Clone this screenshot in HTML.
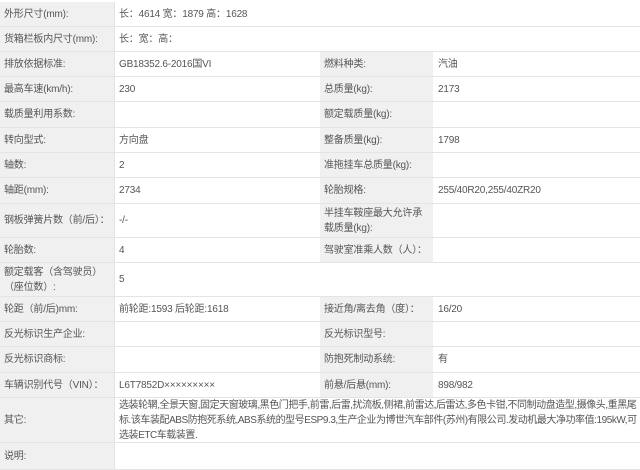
<!DOCTYPE html>
<html><head><meta charset="utf-8"><style>
body{margin:0;width:640px;height:470px;overflow:hidden;background:#fff;font-family:"Liberation Sans","Noto Sans CJK SC",sans-serif;font-size:10px;color:#555;letter-spacing:-0.2px}
.c{position:absolute;box-sizing:border-box;display:flex;align-items:center;padding-left:5px;border-bottom:1px solid #e4e4e4;line-height:15px}
.l{background:#f0f0f0}
</style></head><body>
<div id="t"></div>
<script>
var R=[
[2,27,"外形尺寸(mm):","长：4614 宽：1879 高：1628",null,null,1],
[27,52,"货箱栏板内尺寸(mm):","长：宽：高：",null,null,1],
[52,77,"排放依据标准:","GB18352.6-2016国VI","燃料种类:","汽油"],
[77,102,"最高车速(km/h):","230","总质量(kg):","2173"],
[102,128,"载质量利用系数:","","额定载质量(kg):",""],
[128,153,"转向型式:","方向盘","整备质量(kg):","1798"],
[153,178,"轴数:","2","准拖挂车总质量(kg):",""],
[178,204,"轴距(mm):","2734","轮胎规格:","255/40R20,255/40ZR20"],
[204,238,"钢板弹簧片数（前/后）：","-/-","半挂车鞍座最大允许承载质量(kg):",""],
[238,263,"轮胎数:","4","驾驶室准乘人数（人）：",""],
[263,297,"额定载客（含驾驶员）（座位数）:","5",null,null,1],
[297,322,"轮距（前/后)mm:","前轮距:1593 后轮距:1618","接近角/离去角（度）：","16/20"],
[322,347,"反光标识生产企业:","","反光标识型号:",""],
[347,373,"反光标识商标:","","防抱死制动系统:","有"],
[373,398,"车辆识别代号（VIN）：","L6T7852D×××××××××","前悬/后悬(mm):","898/982"],
[398,443,"其它:","选装轮辋,全景天窗,固定天窗玻璃,黑色门把手,前雷,后雷,扰流板,侧裙,前雷达,后雷达,多色卡钳,不同制动盘造型,摄像头,重黑尾标.该车装配ABS防抱死系统,ABS系统的型号ESP9.3,生产企业为博世汽车部件(苏州)有限公司.发动机最大净功率值:195kW,可选装ETC车载装置.",null,null,2],
[443,470,"说明:","",null,null,1]];
var h="";
R.forEach(function(r){var t=r[0],H=r[1]-r[0];
function c(x,w,txt,l,s){h+='<div class="c'+(l?' l':'')+'" style="left:'+x+'px;top:'+t+'px;width:'+w+'px;height:'+H+'px;'+(s||'')+'">'+txt+'</div>';}
c(0,115,r[2],1,'border-right:1px solid #e4e4e4;padding-left:4px;padding-right:2px');
if(r[6]){c(115,525,r[3],0,'padding-left:4px;padding-right:2px'+(r[6]==2?';letter-spacing:-0.45px':''));}
else{c(115,205,r[3],0,'padding-left:4px');c(320,113,r[4],1,'padding-left:4px;padding-right:2px');c(433,207,r[5],0);}
});
document.getElementById("t").innerHTML=h;
</script>
</body></html>
